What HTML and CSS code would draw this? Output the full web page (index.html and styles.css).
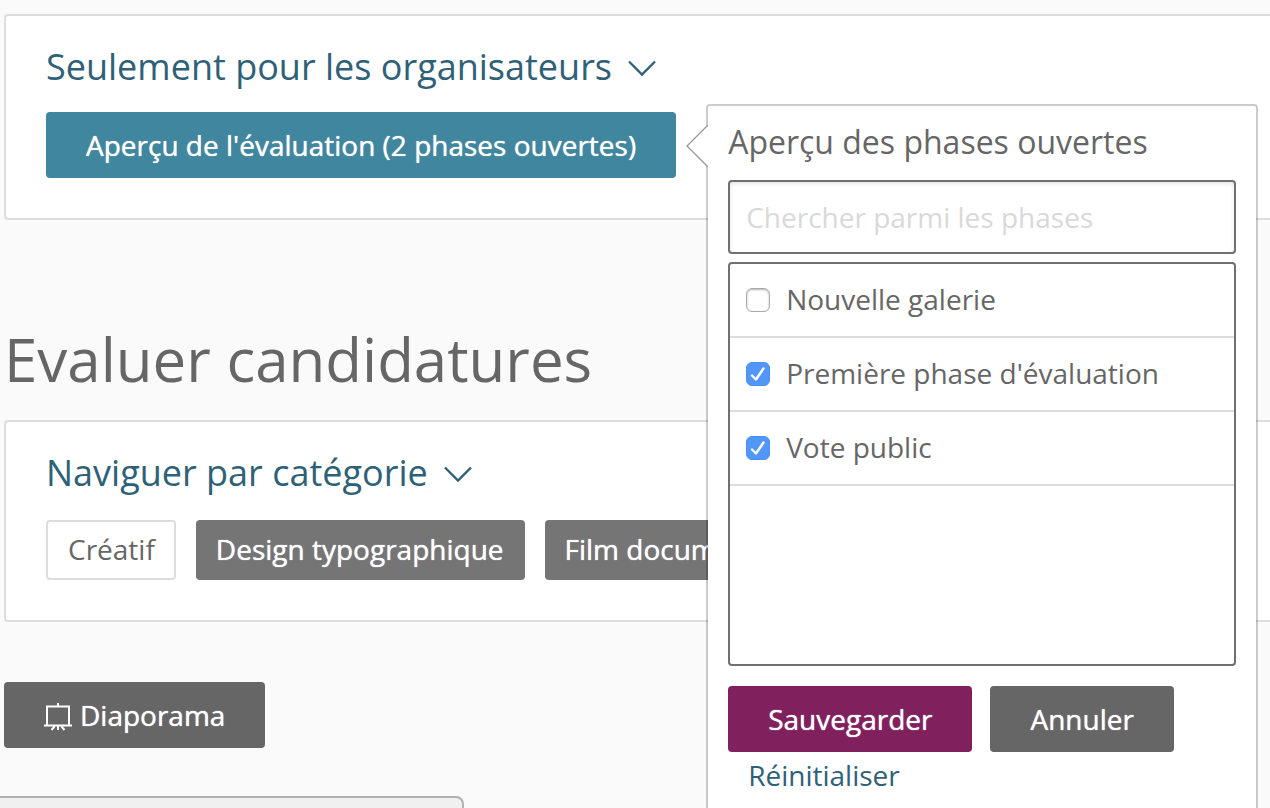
FILE: index.html
```html
<!DOCTYPE html>
<html lang="fr">
<head>
<meta charset="utf-8">
<title>Evaluer candidatures</title>
<link rel="stylesheet" href="styles.css">
</head>
<body>
<main class="page">
  <section class="panel panel-organizers">
    <h2 class="panel-title">
      <a href="#">Seulement pour les organisateurs
        <svg class="chevron" viewBox="0 0 30 18" aria-hidden="true"><path d="M2 2.5 15 15.5 28 2.5"/></svg>
      </a>
    </h2>
    <div class="anchor">
      <button type="button" class="btn btn-teal">Aperçu de l'évaluation (2 phases ouvertes)</button>
      <form class="popover">
        <svg class="popover-arrow" viewBox="0 0 22 44" aria-hidden="true"><path class="arrow-fill" d="M22 1 1 22 22 43Z"/><path class="arrow-line" d="M22 1 1 22 22 43"/></svg>
        <h3 class="popover-title">Aperçu des phases ouvertes</h3>
        <input class="search" type="text" placeholder="Chercher parmi les phases" aria-label="Chercher parmi les phases">
        <ul class="phases">
          <li><label class="phase"><input type="checkbox">Nouvelle galerie</label></li>
          <li><label class="phase"><input type="checkbox" checked>Première phase d'évaluation</label></li>
          <li><label class="phase"><input type="checkbox" checked>Vote public</label></li>
        </ul>
        <div class="actions">
          <button type="button" class="btn btn-plum">Sauvegarder</button>
          <button type="button" class="btn btn-gray">Annuler</button>
        </div>
        <a class="reset" href="#">Réinitialiser</a>
      </form>
    </div>
  </section>

  <h1 class="page-title">Evaluer candidatures</h1>

  <section class="panel panel-categories">
    <h2 class="panel-title">
      <a href="#">Naviguer par catégorie
        <svg class="chevron" viewBox="0 0 30 18" aria-hidden="true"><path d="M2 2.5 15 15.5 28 2.5"/></svg>
      </a>
    </h2>
    <nav class="tags">
      <a class="tag tag-current" href="#">Créatif</a>
      <a class="tag" href="#">Design typographique</a>
      <a class="tag" href="#">Film documentaire</a>
    </nav>
  </section>

  <button type="button" class="btn btn-gray btn-slides">
    <svg class="easel" viewBox="0 0 28 28" aria-hidden="true"><path d="M14 0v3M3 22V3.500h22V22M0 22.500h28M10.500 23.500 7.500 27M14 23v4M17.500 23.500l3 3.500"/></svg>
    Diaporama
  </button>
  <div class="drawer"></div>
</main>
</body>
</html>
```

FILE: styles.css
```css
* {
  box-sizing: border-box;
}

body {
  margin: 0;
  background: #fafafa;
  color: #666;
  font: 28px/38px "Open Sans", "Noto Sans", sans-serif;
}

h1,
h2,
h3,
ul {
  margin: 0;
  padding: 0;
  font-weight: 400;
}

a {
  color: #2e6177;
  text-decoration: none;
}

.page {
  display: flex;
  flex-direction: column;
  align-items: flex-start;
  height: 100vh;
  padding: 14px 0 0 4px;
  overflow: hidden;
}

.page > * {
  flex-shrink: 0;
}

.panel {
  align-self: stretch;
  padding: 26px 40px 40px;
  background: #fff;
  border: 2px solid #ddd;
  border-right: 0;
  border-radius: 4px 0 0 4px;
}

.panel-title {
  margin-bottom: 20px;
  font-size: 36px;
  line-height: 50px;
}

.panel-title a {
  display: inline-flex;
  align-items: center;
  gap: 15px;
}

.chevron {
  width: 30px;
  height: 18px;
  margin-top: 2px;
  fill: none;
  stroke: #2e6177;
  stroke-width: 2.3;
}

.btn {
  display: block;
  padding: 14px 40px;
  border: 0;
  border-radius: 4px;
  color: #fff;
  font: inherit;
  text-shadow: 0 0 1px #fff;
  white-space: nowrap;
}

.btn-teal {
  background: #3f869e;
}

.btn-plum {
  background: #80215d;
}

.btn-gray {
  background: #666;
}

.anchor {
  position: relative;
  width: fit-content;
}

.popover {
  position: absolute;
  z-index: 1;
  top: -8px;
  left: calc(100% + 30px);
  width: 552px;
  padding: 12px 20px 30px;
  background: #fff;
  background-clip: padding-box;
  border: 2px solid rgba(0, 0, 0, 0.2);
  border-radius: 4px;
}

.popover-arrow {
  position: absolute;
  top: 18px;
  left: -22px;
  width: 22px;
  height: 44px;
}

.arrow-fill {
  fill: #fff;
}

.arrow-line {
  fill: none;
  stroke: #999;
  stroke-width: 1.3;
}

.popover-title {
  margin-bottom: 14px;
  font-size: 32px;
  line-height: 48px;
}

.search {
  display: block;
  width: 100%;
  height: 74px;
  margin-bottom: 8px;
  padding: 0 16px;
  background: #fff;
  border: 2px solid #707070;
  border-radius: 4px;
  box-shadow: inset 0 2px 4px rgba(0, 0, 0, 0.1);
  color: #666;
  font: inherit;
}

.search::placeholder {
  color: #d9d9d9;
  opacity: 1;
}

.phases {
  height: 404px;
  margin-bottom: 20px;
  border: 2px solid #707070;
  border-radius: 4px;
  list-style: none;
}

.phase {
  display: flex;
  align-items: center;
  gap: 16px;
  padding: 16px 16px 18px;
  border-bottom: 2px solid #ddd;
}

.phase input {
  appearance: none;
  width: 24px;
  height: 24px;
  margin: 2px 0 0;
  background: #fff;
  border: 1px solid #aaa;
  border-radius: 6px;
  box-shadow: inset 0 1px 2px rgba(0, 0, 0, 0.3);
}

.phase input:checked {
  background: #5297f7 url("data:image/svg+xml,%3Csvg xmlns='http://www.w3.org/2000/svg' viewBox='0 0 24 24'%3E%3Cpath d='M6 13.500l4 4 7.500-11' fill='none' stroke='white' stroke-width='2.4' stroke-linecap='round' stroke-linejoin='round'/%3E%3C/svg%3E") center / 24px 24px;
  border-color: #4a8ff0;
  box-shadow: none;
}

.actions {
  display: flex;
  gap: 18px;
  margin-bottom: 4px;
}

.reset {
  display: block;
  width: fit-content;
  padding-left: 20px;
}

.page-title {
  height: 200px;
  padding-top: 89px;
  font-size: 60px;
  line-height: 100px;
}

.panel-categories .panel-title {
  margin-bottom: 22px;
}

.tags {
  display: flex;
  gap: 20px;
}

.tag {
  padding: 10px 21px 12px 20px;
  background: #757575;
  border-radius: 4px;
  color: #fff;
  text-shadow: 0 0 1px #fff;
  white-space: nowrap;
}

.tag-current {
  padding: 8px 19px 10px 20px;
  background: #fff;
  border: 2px solid #ddd;
  color: #666;
  text-shadow: none;
}

.btn-slides {
  display: flex;
  align-items: center;
  gap: 8px;
  margin: 60px 0 48px;
}

.easel {
  width: 28px;
  height: 28px;
  margin-top: 4px;
  fill: none;
  stroke: #fff;
  stroke-width: 2;
}

.drawer {
  width: 464px;
  height: 60px;
  margin-left: -4px;
  background: #f0f0f0;
  border: 2px solid #b0b0b0;
  border-left: 0;
  border-radius: 0 8px 0 0;
}
```
